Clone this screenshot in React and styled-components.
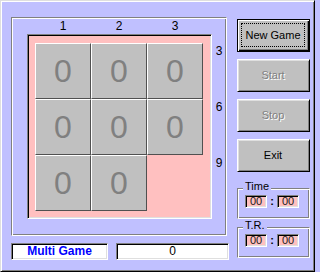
import React from "react";
import styled, { createGlobalStyle } from "styled-components";

const Global = createGlobalStyle`
  html, body { margin: 0; padding: 0; background: #c0c0ff; }
  * { box-sizing: border-box; }
  body { font-family: "Liberation Sans", Arial, sans-serif; }
`;

const Window = styled.div`
  width: 315px;
  height: 272px;
  background: #c0c0ff;
  border: 1px solid;
  border-color: #dfdfdf #000 #000 #dfdfdf;
  box-shadow: inset 1px 1px #fff, inset -1px -1px #808080;
  display: flex;
  padding: 16px 0 0 10px;
`;

const LeftCol = styled.div`
  display: flex;
  flex-direction: column;
`;

const RightCol = styled.div`
  display: flex;
  flex-direction: column;
  margin-left: 8px;
  margin-top: 2px;
`;

const Frame = styled.div`
  width: 216px;
  height: 219px;
  border: 1px solid;
  border-color: #808080 #fff #fff #808080;
  box-shadow: inset 1px 1px #fff, inset -1px -1px #808080;
  display: grid;
  grid-template-columns: 185px 1fr;
  grid-template-rows: 16px 185px;
  padding-left: 15px;
`;

const ColLabels = styled.div`
  display: grid;
  grid-template-columns: repeat(3, 56px);
  padding-left: 8px;
`;

const Label = styled.div`
  font-size: 12px;
  line-height: 16px;
  color: #000;
  text-align: center;
`;

const Corner = styled.div``;

const Board = styled.div`
  width: 185px;
  height: 185px;
  border: 1px solid;
  border-color: #808080 #fff #fff #808080;
  box-shadow: inset 1px 1px #000, inset -1px -1px #dfdfdf;
  background: #ffc0c0;
  padding: 8px 0 0 7px;
`;

const TileGrid = styled.div`
  display: grid;
  grid-template-columns: repeat(3, 56px);
  grid-template-rows: repeat(3, 56px);
`;

const Tile = styled.div`
  background: #c0c0c0;
  border: 1px solid;
  border-color: #fff #505050 #505050 #fff;
  display: flex;
  align-items: center;
  justify-content: center;
  font-size: 32px;
  color: #808080;
  line-height: 1;
`;

const RowLabels = styled.div`
  display: grid;
  grid-template-rows: repeat(3, 56px);
  padding-top: 9px;
  align-items: start;
`;

const Button = styled.div`
  width: 73px;
  height: 33px;
  margin-bottom: 7px;
  background: #c0c0c0;
  border: 1px solid;
  border-color: ${(p) => (p.$default ? "#000" : "#fff #000 #000 #fff")};
  box-shadow: ${(p) =>
    p.$default
      ? "inset 1px 1px #fff, inset -1px -1px #000, inset -2px -2px #808080"
      : "inset 1px 1px #dfdfdf, inset -1px -1px #808080"};
  padding: 3px 4px 4px 3px;
  display: flex;
  font-size: 11px;
  color: ${(p) => (p.$disabled ? "#808080" : "#000")};
  text-shadow: ${(p) => (p.$disabled ? "1px 1px 0 #fff" : "none")};
`;

const Caption = styled.div`
  flex: 1;
  display: flex;
  align-items: center;
  justify-content: center;
  border: 1px dotted ${(p) => (p.$focus ? "#000" : "transparent")};
`;

const Group = styled.div`
  position: relative;
  width: 73px;
  height: 31px;
  margin-top: ${(p) => p.$mt}px;
  border: 1px solid;
  border-color: #808080 #fff #fff #808080;
  box-shadow: inset 1px 1px #fff, inset -1px -1px #808080;
  display: flex;
  align-items: flex-start;
  padding: 6px 0 0 7px;
`;

const Legend = styled.span`
  position: absolute;
  top: -9px;
  left: 5px;
  padding: 0 2px;
  background: #c0c0ff;
  font-size: 11px;
  line-height: 13px;
  color: #000;
`;

const Field = styled.div`
  width: 22px;
  height: 13px;
  border: 1px solid;
  border-color: #808080 #fff #fff #808080;
  box-shadow: inset 1px 1px #000, inset -1px -1px #dfdfdf;
  background: #ffc0c0;
  font-size: 11px;
  line-height: 11px;
  text-align: center;
  color: #202020;
`;

const Colon = styled.div`
  width: 10px;
  font-size: 11px;
  line-height: 13px;
  text-align: center;
  font-weight: bold;
`;

const BottomBar = styled.div`
  display: flex;
  gap: 8px;
  margin-top: 7px;
`;

const StatusBox = styled.div`
  width: ${(p) => p.$w}px;
  height: 17px;
  border: 1px solid;
  border-color: #808080 #fff #fff #808080;
  box-shadow: inset 1px 1px #000, inset -1px -1px #dfdfdf;
  background: #fff;
  font-size: 12px;
  line-height: 15px;
  text-align: center;
  color: ${(p) => (p.$accent ? "#0000ff" : "#000")};
  font-weight: ${(p) => (p.$accent ? "bold" : "normal")};
`;

const tiles = ["0", "0", "0", "0", "0", "0", "0", "0", null];

function TimeGroup({ label, mt }) {
  return (
    <Group $mt={mt}>
      <Legend>{label}</Legend>
      <Field>00</Field>
      <Colon>:</Colon>
      <Field>00</Field>
    </Group>
  );
}

export default function App() {
  return (
    <>
      <Global />
      <Window>
        <LeftCol>
          <Frame>
            <ColLabels>
              <Label>1</Label>
              <Label>2</Label>
              <Label>3</Label>
            </ColLabels>
            <Corner />
            <Board>
              <TileGrid>
                {tiles.map((t, i) => (t === null ? <div key={i} /> : <Tile key={i}>{t}</Tile>))}
              </TileGrid>
            </Board>
            <RowLabels>
              <Label>3</Label>
              <Label>6</Label>
              <Label>9</Label>
            </RowLabels>
          </Frame>
          <BottomBar>
            <StatusBox $w={97} $accent>Multi Game</StatusBox>
            <StatusBox $w={113}>0</StatusBox>
          </BottomBar>
        </LeftCol>
        <RightCol>
          <Button $default>
            <Caption $focus>New Game</Caption>
          </Button>
          <Button $disabled>
            <Caption>Start</Caption>
          </Button>
          <Button $disabled>
            <Caption>Stop</Caption>
          </Button>
          <Button>
            <Caption>Exit</Caption>
          </Button>
          <TimeGroup label="Time" mt={9} />
          <TimeGroup label="T.R." mt={8} />
        </RightCol>
      </Window>
    </>
  );
}
